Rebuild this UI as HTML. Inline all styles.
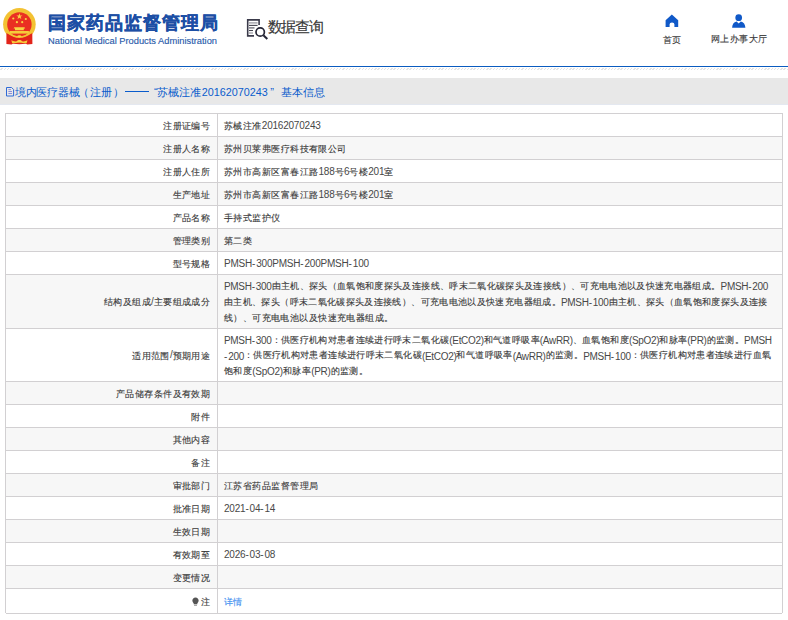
<!DOCTYPE html>
<html><head><meta charset="utf-8">
<style>
*{margin:0;padding:0;box-sizing:border-box}
html,body{width:788px;height:620px;overflow:hidden;background:#fff;font-family:"Liberation Sans",sans-serif;color:#333}
.abs{position:absolute;white-space:nowrap}
#title{left:48px;top:11px;font-size:18px;letter-spacing:0.95px;font-weight:bold;color:#1d4fa5;line-height:24px;-webkit-text-stroke:0.35px #1d4fa5}
#sub{left:48px;top:35px;font-size:9.3px;color:#2b5cab;line-height:12px;-webkit-text-stroke:0.15px #2b5cab}
#query{left:267.5px;top:17px;font-size:15px;letter-spacing:-1.2px;color:#383838;line-height:20px;-webkit-text-stroke:0.15px #383838}
.nav{font-size:9px;color:#3a3a3a;line-height:12px;letter-spacing:0.45px;-webkit-text-stroke:0.12px #3a3a3a}
#blueline{left:0;top:66px;width:788px;height:1px;background:#0b5cc0}
#dots{left:0;top:68px;width:788px;height:2px;background:repeating-linear-gradient(135deg,#fff 0 1.3px,#e4e4e4 1.3px 2.26px)}
#bar{left:0;top:78px;width:788px;height:27px;background:#e8e8e8;border-bottom:1px solid #e4e8f0}
.bt{position:absolute;top:85px;font-size:11px;color:#0a5ccc;line-height:14px;white-space:nowrap;letter-spacing:-0.1px}
.dash{letter-spacing:1.6px}
.num{font-size:10.8px;letter-spacing:0}
#tbl{left:5px;top:113px;width:778px;height:500px;border:1px solid #d2d0d2;border-bottom:none}
.row{position:absolute;left:0;width:776px;border-bottom:1px solid #d2d0d2;font-size:10px;letter-spacing:-0.22px;line-height:15.6px;color:#484848}
.row.g{background:#f7f7f7}
.lab{position:absolute;left:0;width:212px;top:0;bottom:0;border-right:1px solid #d2d0d2;padding-right:6.7px;display:flex;align-items:center;justify-content:flex-end}
.val{position:absolute;left:212px;right:0;top:0;bottom:0;padding-left:6px;padding-top:1px;white-space:nowrap;display:flex;align-items:center}
.c{color:#383838;position:relative;top:0.8px;line-height:0;font-size:9px;-webkit-text-stroke:0.12px currentColor;letter-spacing:calc(0.45px + var(--ls,0px))}
.ln{letter-spacing:calc(-0.22px + var(--ls,0px));height:15.7px}
.link{color:#3b8ef0}
.bulb{margin-right:2px}
.ml{position:relative;top:1px}
.ml .c{top:-1.2px}
.link .c{color:#3b8ef0}
.h{letter-spacing:calc(0.9px + var(--ls,0px))}

</style></head><body>
<svg class="abs" style="left:0;top:0" width="44" height="50" viewBox="0 0 44 50">
  <circle cx="19.4" cy="24.3" r="16.3" fill="#f3c233"/>
  <circle cx="19.4" cy="24.4" r="12.2" fill="#ea3022"/>
  <path d="M6.4 33.2 L8.6 33.6 Q19.4 41.6 30.2 33.6 L32.3 33.2 L32.4 44 L27.4 44.4 L25.8 43.8 L19.4 44.2 L13 43.8 L11.4 44.4 L6.4 44 Z" fill="#e2241a"/>
  <path d="M7.6 32.6 Q19.4 41.6 31.2 32.6" fill="none" stroke="#f3c233" stroke-width="1.5"/>
  <path d="M19.4 13.3 l0.75 2.2 2.3 0 -1.85 1.35 0.7 2.2 -1.9 -1.35 -1.9 1.35 0.7 -2.2 -1.85 -1.35 2.3 0z" fill="#f8d444"/>
  <circle cx="13.3" cy="18.5" r="1.1" fill="#f8d444"/>
  <circle cx="25.8" cy="19" r="1.1" fill="#f8d444"/>
  <circle cx="16.9" cy="22.2" r="1.1" fill="#f8d444"/>
  <circle cx="22.2" cy="22.2" r="1.1" fill="#f8d444"/>
  <path d="M14.3 27.2 H24.5 L25.2 28.6 H23.8 V30.2 H15 V28.6 H13.6 Z" fill="#f8d444"/>
  <path d="M9.8 31 H28.9 V33.6 H9.8Z" fill="#f5cb3a"/>
  <path d="M11.3 40.3 Q15 42.4 19.4 40.6 Q23.8 42.4 27.5 40.3 L26.6 43.2 Q23 43.4 19.4 42.2 Q15.8 43.4 12.2 43.2 Z" fill="#f6cc3a"/>
  <ellipse cx="19.4" cy="41.3" rx="2.4" ry="1.3" fill="#f8d444"/>
  <ellipse cx="19.4" cy="36.3" rx="2" ry="1.1" fill="#f8d444"/>
</svg>
<div id="title" class="abs">国家药品监督管理局</div>
<div id="sub" class="abs">National Medical Products Administration</div>
<svg class="abs" style="left:240px;top:12px" width="32" height="32" viewBox="240 12 32 32">
  <path d="M254 35.9 H247.7 V19.9 H259.1 V25" fill="none" stroke="#3a3a4a" stroke-width="1.6"/>
  <path d="M249 22.9 H257.6" stroke="#9a9aa2" stroke-width="1.3"/>
  <path d="M249 25.4 H257.6" stroke="#44444f" stroke-width="1.1"/>
  <path d="M249 27.9 H254.5" stroke="#6a6a74" stroke-width="1.3"/>
  <path d="M249 30.5 H253" stroke="#44444f" stroke-width="1.1"/>
  <path d="M249 33 H253" stroke="#a0a0a8" stroke-width="1.3"/>
  <circle cx="260.2" cy="32" r="4.2" fill="none" stroke="#262636" stroke-width="1.7"/>
  <path d="M263.4 35.2 L267.3 39" stroke="#262636" stroke-width="2"/>
</svg>
<div id="query" class="abs">数据查询</div>
<svg class="abs" style="left:660px;top:10px" width="24" height="20" viewBox="0 0 24 20">
  <path d="M11.85 4.6 L18.2 10.2 V16.9 H14.4 V14.3 Q14.4 12.6 12 12.6 Q9.6 12.6 9.6 14.3 V16.9 H5.6 V10.2 Z" fill="#1059c8"/>
</svg>
<div class="abs nav" style="left:662.5px;top:34px">首页</div>
<svg class="abs" style="left:728px;top:10px" width="22" height="20" viewBox="0 0 22 20">
  <circle cx="10.7" cy="7.7" r="3.35" fill="#1059c8"/>
  <path d="M4.1 17.8 Q4.3 12.2 8.6 11.4 L10.7 13.6 L12.8 11.4 Q17.1 12.2 17.4 17.8 Z" fill="#1059c8"/>
</svg>
<div class="abs nav" style="left:711px;top:33px">网上办事大厅</div>
<div id="blueline" class="abs"></div>
<div id="dots" class="abs"></div>
<div id="bar" class="abs"></div>
<svg class="abs" style="left:5px;top:86px" width="10" height="12" viewBox="5 86 10 12">
  <path d="M6.5 87.5 H11.6 L13.6 89.5 V96 H6.5 Z" fill="none" stroke="#2f6ad6" stroke-width="1"/>
  <path d="M8.4 89.6 H11 M8.4 91.5 H12 M8.4 93.5 H12" stroke="#7f82d8" stroke-width="0.9"/>
</svg>
<span class="bt" style="left:14.7px">境内医疗器械</span><span class="bt" style="left:77.5px">（</span><span class="bt" style="left:89.7px">注册</span><span class="bt" style="left:112.5px">）</span><span class="bt" style="left:153.9px">“</span><span class="bt" style="left:157.3px">苏械注准</span><span class="bt" style="left:201.7px"><span class="num">20162070243</span></span><span class="bt" style="left:270.2px">”</span><span class="bt" style="left:281.0px">基本信息</span>
<div class="abs" style="left:125px;top:91px;width:23.5px;height:1px;background:#0a5ccc"></div>

<div id="tbl" class="abs">
<div class="row" style="top:0px;height:23px"><div class="lab"><span class="c">注册证编号</span></div><div class="val"><span class="c">苏械注准</span>20162070243</div></div>
<div class="row g" style="top:23px;height:23px"><div class="lab"><span class="c">注册人名称</span></div><div class="val"><span class="c">苏州贝莱弗医疗科技有限公司</span></div></div>
<div class="row" style="top:46px;height:23px"><div class="lab"><span class="c">注册人住所</span></div><div class="val"><span class="c">苏州市高新区富春江路</span>188<span class="c">号</span>6<span class="c">号楼</span>201<span class="c">室</span></div></div>
<div class="row g" style="top:69px;height:23px"><div class="lab"><span class="c">生产地址</span></div><div class="val"><span class="c">苏州市高新区富春江路</span>188<span class="c">号</span>6<span class="c">号楼</span>201<span class="c">室</span></div></div>
<div class="row" style="top:92px;height:23px"><div class="lab"><span class="c">产品名称</span></div><div class="val"><span class="c">手持式监护仪</span></div></div>
<div class="row g" style="top:115px;height:23px"><div class="lab"><span class="c">管理类别</span></div><div class="val"><span class="c">第二类</span></div></div>
<div class="row" style="top:138px;height:23px"><div class="lab"><span class="c">型号规格</span></div><div class="val">PMSH<span class="h">-</span>300PMSH<span class="h">-</span>200PMSH<span class="h">-</span>100</div></div>
<div class="row g" style="top:161px;height:54px"><div class="lab"><span class="c">结构及组成</span>/<span class="c">主要组成成分</span></div><div class="val"><div class="ml"><div class="ln" style="--ls:-0.096px">PMSH<span class="h">-</span>300<span class="c">由主机、探头（血氧饱和度探头及连接线、呼末二氧化碳探头及连接线）、可充电电池以及快速充电器组成。</span>PMSH<span class="h">-</span>200</div><div class="ln" style="--ls:-0.09px"><span class="c">由主机、探头（呼末二氧化碳探头及连接线）、可充电电池以及快速充电器组成。</span>PMSH<span class="h">-</span>100<span class="c">由主机、探头（血氧饱和度探头及连接</span></div><div class="ln" style="--ls:-0.039px"><span class="c">线）、可充电电池以及快速充电器组成。</span></div></div></div></div>
<div class="row" style="top:215px;height:53px"><div class="lab"><span class="c">适用范围</span>/<span class="c">预期用途</span></div><div class="val"><div class="ml"><div class="ln" style="--ls:-0.096px">PMSH<span class="h">-</span>300<span class="c">：供医疗机构对患者连续进行呼末二氧化碳</span>(EtCO2)<span class="c">和气道呼吸率</span>(AwRR)<span class="c">、血氧饱和度</span>(SpO2)<span class="c">和脉率</span>(PR)<span class="c">的监测。</span>PMSH</div><div class="ln" style="--ls:-0.084px"><span class="h">-</span>200<span class="c">：供医疗机构对患者连续进行呼末二氧化碳</span>(EtCO2)<span class="c">和气道呼吸率</span>(AwRR)<span class="c">的监测。</span>PMSH<span class="h">-</span>100<span class="c">：供医疗机构对患者连续进行血氧</span></div><div class="ln" style="--ls:-0.04px"><span class="c">饱和度</span>(SpO2)<span class="c">和脉率</span>(PR)<span class="c">的监测。</span></div></div></div></div>
<div class="row g" style="top:268px;height:23px"><div class="lab"><span class="c">产品储存条件及有效期</span></div><div class="val"></div></div>
<div class="row" style="top:291px;height:23px"><div class="lab"><span class="c">附件</span></div><div class="val"></div></div>
<div class="row g" style="top:314px;height:23px"><div class="lab"><span class="c">其他内容</span></div><div class="val"></div></div>
<div class="row" style="top:337px;height:23px"><div class="lab"><span class="c">备注</span></div><div class="val"></div></div>
<div class="row g" style="top:360px;height:23px"><div class="lab"><span class="c">审批部门</span></div><div class="val"><span class="c">江苏省药品监督管理局</span></div></div>
<div class="row" style="top:383px;height:23px"><div class="lab"><span class="c">批准日期</span></div><div class="val">2021<span class="h">-</span>04<span class="h">-</span>14</div></div>
<div class="row g" style="top:406px;height:23px"><div class="lab"><span class="c">生效日期</span></div><div class="val"></div></div>
<div class="row" style="top:429px;height:23px"><div class="lab"><span class="c">有效期至</span></div><div class="val">2026<span class="h">-</span>03<span class="h">-</span>08</div></div>
<div class="row g" style="top:452px;height:23px"><div class="lab"><span class="c">变更情况</span></div><div class="val"></div></div>
<div class="row" style="top:475px;height:25px"><div class="lab"><svg class="bulb" width="7" height="9" viewBox="0 0 8 10"><path d="M4 0.3C1.9 0.3 0.4 1.9 0.4 3.8c0 1.4 0.8 2.3 1.5 3.1v1.2h4.2V6.9c0.7-0.8 1.5-1.7 1.5-3.1C7.6 1.9 6.1 0.3 4 0.3z" fill="#555"/><path d="M2.3 8.8h3.4v0.9H2.3z" fill="#777"/></svg><span class="c">注</span></div><div class="val" style="padding-bottom:2px"><span class="link"><span class="c">详情</span></span></div></div>
</div>
</body></html>
